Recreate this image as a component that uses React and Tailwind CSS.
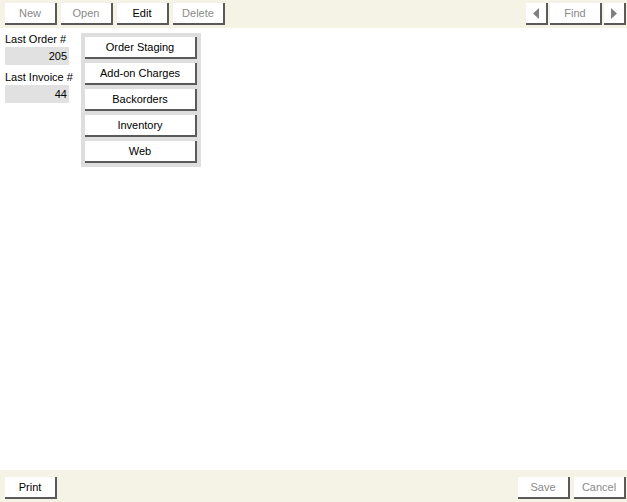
import { useState } from "react";

const font = { fontFamily: '"Liberation Sans", Arial, sans-serif' };

function Btn({ label, disabled, className = "", children }) {
  return (
    <button
      className={`h-[22px] bg-white border-r-2 border-b-2 border-[#5a5a5a] text-[11px] leading-none flex items-center justify-center ${
        disabled ? "text-[#8a8a8a]" : "text-black"
      } ${className}`}
    >
      {children || label}
    </button>
  );
}

function Arrow({ dir }) {
  return (
    <svg width="6" height="11" viewBox="0 0 6 11">
      {dir === "left" ? (
        <polygon points="6,0 0,5.5 6,11" fill="#808080" />
      ) : (
        <polygon points="0,0 6,5.5 0,11" fill="#808080" />
      )}
    </svg>
  );
}

export default function App() {
  const [lastOrder] = useState(205);
  const [lastInvoice] = useState(44);
  const links = ["Order Staging", "Add-on Charges", "Backorders", "Inventory", "Web"];

  return (
    <div className="w-[627px] h-[502px] flex flex-col bg-white" style={font}>
      {/* toolbar */}
      <div className="h-[28px] bg-[#f5f2e6] flex items-start pt-[3px] px-[5px]">
        <div className="flex gap-[4px]">
          <Btn label="New" disabled className="w-[52px]" />
          <Btn label="Open" disabled className="w-[52px]" />
          <Btn label="Edit" className="w-[52px]" />
          <Btn label="Delete" disabled className="w-[52px]" />
        </div>
        <div className="ml-auto flex gap-[2px] -mr-[4px]">
          <Btn disabled className="w-[22px]">
            <Arrow dir="left" />
          </Btn>
          <Btn label="Find" disabled className="w-[52px]" />
          <Btn disabled className="w-[22px]">
            <Arrow dir="right" />
          </Btn>
        </div>
      </div>

      {/* body */}
      <div className="flex-1 flex items-start pt-[5px] pl-[5px] gap-[12px]">
        <div className="w-[64px] text-[11px] text-black">
          <div className="leading-[13px] whitespace-nowrap">Last Order #</div>
          <div className="h-[18px] mt-[1px] bg-[#e1e1e1] flex items-center justify-end pr-[2px]">
            {lastOrder}
          </div>
          <div className="leading-[13px] mt-[6px] whitespace-nowrap">Last Invoice #</div>
          <div className="h-[18px] mt-[1px] bg-[#e1e1e1] flex items-center justify-end pr-[2px]">
            {lastInvoice}
          </div>
        </div>
        <div className="w-[120px] bg-[#dedede] p-[4px] flex flex-col gap-[4px]">
          {links.map((l) => (
            <Btn key={l} label={l} className="w-full" />
          ))}
        </div>
      </div>

      {/* footer */}
      <div className="h-[32px] bg-[#f5f2e6] flex items-start pt-[7px] px-[5px]">
        <Btn label="Print" className="w-[52px]" />
        <div className="ml-auto flex gap-[4px] -mr-[4px]">
          <Btn label="Save" disabled className="w-[52px]" />
          <Btn label="Cancel" disabled className="w-[52px]" />
        </div>
      </div>
    </div>
  );
}
